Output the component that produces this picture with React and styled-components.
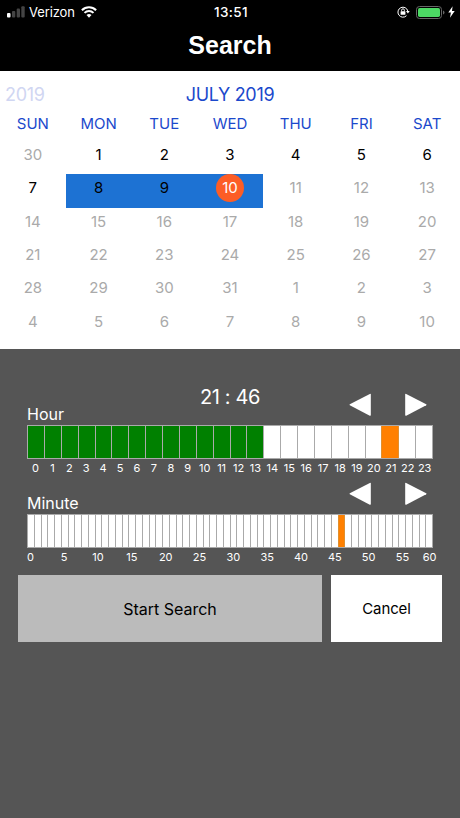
import React from "react";
import styled, { createGlobalStyle } from "styled-components";

const GlobalStyle = createGlobalStyle`
  * {
    box-sizing: border-box;
  }

  body {
    margin: 0;
    background-color: #555;
    font-family: Inter, "Liberation Sans", sans-serif;
  }
`;

const Container = styled.div`
  width: 460px;
  height: 818px;
  display: flex;
  flex-direction: column;
  background-color: #555;
  overflow: hidden;
`;

const Header = styled.header`
  height: 71px;
  background-color: black;
  color: white;
`;

const StatusBar = styled.div`
  height: 24px;
  padding: 0 5px 0 7px;
  display: grid;
  grid-template-columns: 1fr auto 1fr;
  align-items: center;
`;

const StatusLeft = styled.div`
  display: flex;
  align-items: center;
`;

const StatusRight = styled.div`
  display: flex;
  align-items: center;
  justify-content: flex-end;
`;

const Carrier = styled.span`
  font-size: 13px;
  line-height: 24px;
  letter-spacing: -0.1px;
  margin: 0 6px 0 3px;
`;

const Clock = styled.span`
  font-size: 13.5px;
  font-weight: 500;
  line-height: 24px;
  letter-spacing: 0.4px;
`;

const Title = styled.h1`
  margin: 0;
  font-family: "Liberation Sans", Arial, sans-serif;
  font-size: 25px;
  font-weight: bold;
  line-height: 42px;
  text-align: center;
`;

const Calendar = styled.section`
  height: 278px;
  background-color: white;
`;

const MonthBar = styled.div`
  height: 38px;
  padding: 4px 5px 0;
  display: grid;
  grid-template-columns: 1fr auto 1fr;
  font-size: 18px;
  line-height: 39px;
  letter-spacing: -0.3px;
  color: #1b49cc;
`;

const PreviousYear = styled.span`
  color: #d0d6f2;
`;

const Week = styled.div`
  display: grid;
  grid-template-columns: repeat(7, 1fr);
`;

const Weekday = styled.div`
  height: 32px;
  font-size: 15px;
  line-height: 30px;
  text-align: center;
  color: #1b49cc;
`;

const Day = styled.div`
  height: 33.33px;
  display: flex;
  justify-content: center;
  background-color: ${(props) => (props.$inRange ? "#1d72d3" : "white")};
  color: ${(props) => (props.$muted ? "#aaa" : "black")};
`;

const DayNumber = styled.span`
  width: 28px;
  height: 28px;
  border-radius: 50%;
  font-size: 15px;
  line-height: 28px;
  text-align: center;
  background-color: ${(props) => (props.$selected ? "#fc5d26" : "transparent")};
  color: ${(props) => (props.$selected ? "white" : "inherit")};
`;

const TimePicker = styled.section`
  padding: 31px 27px 0;
  color: white;
`;

const ScaleHeader = styled.div`
  height: ${(props) => props.$height}px;
  padding-right: 6px;
  display: grid;
  grid-template-columns: 1fr auto 1fr;
`;

const ScaleLabel = styled.div`
  align-self: end;
  font-size: 16px;
  line-height: 22px;
`;

const Time = styled.div`
  font-size: 20px;
  line-height: 34px;
  letter-spacing: -0.4px;
  padding-left: 6px;
`;

const Arrows = styled.div`
  height: 24px;
  margin-top: ${(props) => props.$top}px;
  display: flex;
  justify-content: flex-end;
  gap: 34px;
`;

const ArrowButton = styled.button`
  width: 22px;
  height: 24px;
  padding: 0;
  border: none;
  background: none;
  cursor: pointer;
  transform: ${(props) => (props.$next ? "scaleX(-1)" : "none")};

  svg {
    display: block;
  }
`;

const Bar = styled.div`
  height: 34px;
  width: 406px;
  display: flex;
  border: 1px solid #aaa;
  border-right-width: 0;
`;

const cellColors = {
  past: "green",
  selected: "#ff8000",
  free: "white",
};

const Cell = styled.div`
  flex: 1 1 0;
  border-right: 1px solid
    ${(props) => (props.$state === "selected" ? "#e0902f" : "#aaa")};
  background-color: ${(props) => cellColors[props.$state]};
  box-shadow: ${(props) =>
    props.$state === "selected" ? "-1px 0 0 #e0902f" : "none"};
`;

const Ticks = styled.div`
  width: 406px;
  height: 18px;
  display: flex;
  font-size: 11px;
  line-height: 18px;
`;

const Tick = styled.div`
  flex: 1 1 0;
  min-width: 0;
  display: flex;
  justify-content: center;
  white-space: nowrap;
`;

const Actions = styled.div`
  margin: 9px 18px 0;
  height: 67px;
  display: flex;
  gap: 9px;
`;

const Button = styled.button`
  width: ${(props) => (props.$primary ? 304 : 111)}px;
  padding: 0;
  border: none;
  background-color: ${(props) => (props.$primary ? "#bbb" : "white")};
  color: black;
  font-family: inherit;
  font-size: ${(props) => (props.$primary ? 16 : 15)}px;
  letter-spacing: ${(props) => (props.$primary ? 0 : -0.1)}px;
  cursor: pointer;
`;

const WEEKDAYS = ["SUN", "MON", "TUE", "WED", "THU", "FRI", "SAT"];
const TODAY = 10;
const RANGE_START = 8;

// offset 0 is June 30, offset n is July n
const DAYS = Array.from({ length: 42 }, (_, offset) => {
  if (offset === 0) return { offset, number: 30 };
  return { offset, number: offset > 31 ? offset - 31 : offset };
});

const SignalIcon = () => (
  <svg width="19" height="12" viewBox="0 0 19 12">
    <rect x="0" y="7" width="3.5" height="4.4" rx="1" fill="white" />
    <rect x="5" y="5" width="3.3" height="6.4" rx="1" fill="#444" />
    <rect x="9.7" y="2.5" width="3.3" height="8.9" rx="1" fill="#444" />
    <rect x="14.3" y="0.2" width="3.4" height="11.2" rx="1" fill="#444" />
  </svg>
);

const WifiIcon = () => (
  <svg width="16" height="12" viewBox="0 0 16 12" fill="none" stroke="white">
    <path d="M.9 4.2a10.2 10.2 0 0 1 14.2 0" strokeWidth="2.1" />
    <path d="M3.5 6.9a6.5 6.5 0 0 1 9 0" strokeWidth="2" />
    <path d="M8 11.7 5.5 9.1a3.6 3.6 0 0 1 5 0z" fill="white" stroke="none" />
  </svg>
);

const RotationLockIcon = () => (
  <svg width="13" height="12" viewBox="0 0 13 12" fill="none" stroke="white">
    <path d="M9.5 9.7A5 5 0 1 1 10.8 5" strokeWidth="1" />
    <path d="M9 5h3.7l-1.8 2.4z" fill="white" stroke="none" />
    <rect x="3.6" y="5.2" width="4.8" height="3.6" rx=".5" fill="white" stroke="none" />
    <path d="M4.6 5.3V4.2a1.4 1.4 0 0 1 2.8 0v1.1" strokeWidth=".9" />
  </svg>
);

const BatteryIcon = () => (
  <svg width="29" height="13" viewBox="0 0 29 13">
    <rect x=".5" y=".5" width="25" height="12" rx="3" fill="none" stroke="#666" />
    <rect x="2" y="2" width="22" height="9" rx="1.7" fill="#4cd964" />
    <path d="M27 4.5q1.5.6 1.5 2T27 8.5z" fill="#666" />
  </svg>
);

const BoltIcon = () => (
  <svg width="7" height="12" viewBox="0 0 7 12" fill="white">
    <path d="M4.6.3.3 6.6h2.6L2 11.7l4.7-6.8H4z" />
  </svg>
);

const Arrow = ({ next }) => (
  <ArrowButton $next={next} aria-label={next ? "Next" : "Previous"}>
    <svg width="22" height="24" viewBox="0 0 22 24" fill="white">
      <path d="M.8 11.3 20.8.9q1-.4 1 .6v20.6q0 1-1 .6L.8 12.2q-.6-.4 0-.9z" />
    </svg>
  </ArrowButton>
);

const StatusIcons = styled.div`
  display: flex;
  align-items: center;
  gap: ${(props) => props.$gap}px;
`;

const hourState = (hour) => {
  if (hour === 21) return "selected";
  return hour < 14 ? "past" : "free";
};

const HourScale = () => (
  <>
    <Bar>
      {Array.from({ length: 24 }, (_, hour) => (
        <Cell key={hour} $state={hourState(hour)} />
      ))}
    </Bar>
    <Ticks>
      {Array.from({ length: 24 }, (_, hour) => (
        <Tick key={hour}>{hour}</Tick>
      ))}
    </Ticks>
  </>
);

const MinuteScale = () => (
  <>
    <Bar>
      {Array.from({ length: 60 }, (_, minute) => (
        <Cell key={minute} $state={minute === 46 ? "selected" : "free"} />
      ))}
    </Bar>
    <Ticks>
      {Array.from({ length: 60 }, (_, minute) => (
        <Tick key={minute}>
          {minute % 5 === 0 && minute}
          {minute === 59 && 60}
        </Tick>
      ))}
    </Ticks>
  </>
);

const App = () => {
  return (
    <Container>
      <GlobalStyle />
      <Header>
        <StatusBar>
          <StatusLeft>
            <SignalIcon />
            <Carrier>Verizon</Carrier>
            <WifiIcon />
          </StatusLeft>
          <Clock>13:51</Clock>
          <StatusRight>
            <StatusIcons $gap={6}>
              <RotationLockIcon />
              <StatusIcons $gap={3}>
                <BatteryIcon />
                <BoltIcon />
              </StatusIcons>
            </StatusIcons>
          </StatusRight>
        </StatusBar>
        <Title>Search</Title>
      </Header>
      <Calendar>
        <MonthBar>
          <PreviousYear>2019</PreviousYear>
          <span>JULY 2019</span>
        </MonthBar>
        <Week>
          {WEEKDAYS.map((name) => (
            <Weekday key={name}>{name}</Weekday>
          ))}
        </Week>
        <Week>
          {DAYS.map(({ offset, number }) => (
            <Day
              key={offset}
              $inRange={offset >= RANGE_START && offset <= TODAY}
              $muted={offset === 0 || offset > TODAY}
            >
              <DayNumber $selected={offset === TODAY}>{number}</DayNumber>
            </Day>
          ))}
        </Week>
      </Calendar>
      <TimePicker>
        <ScaleHeader $height={45}>
          <ScaleLabel>Hour</ScaleLabel>
          <Time>21 : 46</Time>
          <Arrows $top={12.5}>
            <Arrow />
            <Arrow next />
          </Arrows>
        </ScaleHeader>
        <HourScale />
        <ScaleHeader $height={37}>
          <ScaleLabel>Minute</ScaleLabel>
          <span />
          <Arrows $top={4.5}>
            <Arrow />
            <Arrow next />
          </Arrows>
        </ScaleHeader>
        <MinuteScale />
      </TimePicker>
      <Actions>
        <Button $primary>Start Search</Button>
        <Button>Cancel</Button>
      </Actions>
    </Container>
  );
};

export default App;
